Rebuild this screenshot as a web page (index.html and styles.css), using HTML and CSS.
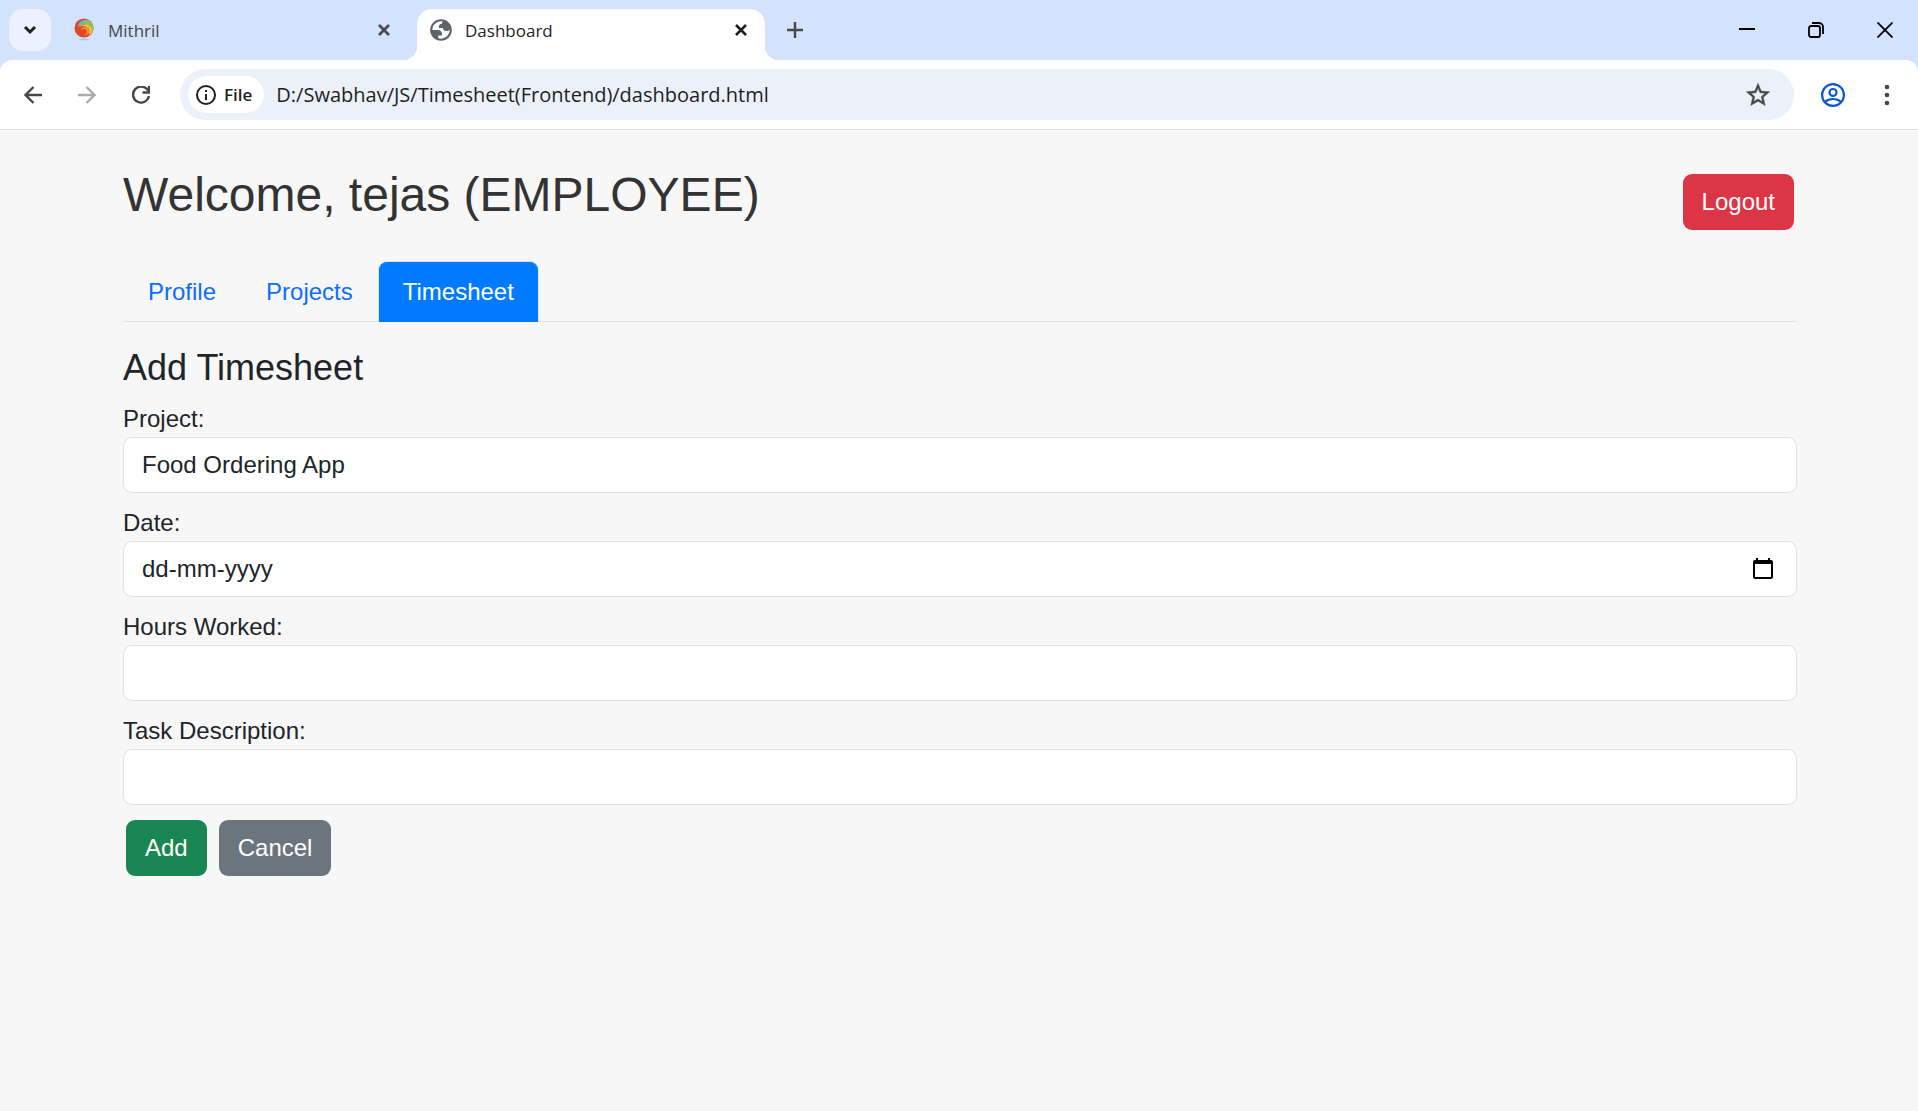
FILE: index.html
```html
<!DOCTYPE html>
<html lang="en">
<head>
<meta charset="utf-8">
<title>Dashboard</title>
<link rel="stylesheet" href="styles.css">
</head>
<body>
<header class="browser">
  <div class="tabstrip">
    <button class="tab-search" aria-label="Search tabs"><svg width="14" height="10" viewBox="0 0 14 10"><path d="M2 2l5 5 5-5" fill="none" stroke="#1f1f1f" stroke-width="3"/></svg></button>
    <div class="tab">
      <svg class="favicon" width="22" height="24" viewBox="0 0 22 24">
        <ellipse cx="11" cy="21.500" rx="5" ry=".8" fill="#b9bfdc"/>
        <circle cx="11" cy="10" r="9.500" fill="#e2452a"/>
        <path d="M6 9C6 3 13 0 17 3c5 4 4 9 1 13 1-8-5-12-12-7z" fill="#8cc152"/>
        <path d="M5 9C5 3 12 0 17 4c-5-1-9 1-12 5z" fill="#5bb5dc"/>
        <path d="M7 9c4-4 11-2 12 3 0 2-1 4-3 5 2-6-3-11-9-8z" fill="#f8c93c"/>
        <path d="M8 13c0-5 8-6 9-1 0 4-4 6-7 5 3 0 5-3 3-5-1-2-4-1-5 1z" fill="#f58a3a"/>
      </svg>
      <span class="tab-title">Mithril</span>
      <button class="plain" aria-label="Close Mithril"><svg width="14" height="14" viewBox="0 0 14 14"><path d="M2 2l10 10M12 2L2 12" stroke="#474747" stroke-width="2.600"/></svg></button>
    </div>
    <div class="tab tab-current">
      <svg class="favicon" width="26" height="26" viewBox="0 0 24 24"><path fill="#5f6368" fill-rule="evenodd" d="M12 2C6.480 2 2 6.480 2 12s4.480 10 10 10 10-4.480 10-10S17.520 2 12 2zM4 12h4.400c3.407.022 4.922 1.730 4.543 5.127H9.488v2.470a8.004 8.004 0 0 0 10.498-8.083C19.327 12.504 18.332 13 17 13c-2.137 0-3.206-.916-3.206-2.750h-3.748c-.274-2.728.683-4.092 2.870-4.092 0-.975.327-1.597.811-1.970A8.004 8.004 0 0 0 4 12z"/></svg>
      <span class="tab-title">Dashboard</span>
      <button class="plain" aria-label="Close Dashboard"><svg width="14" height="14" viewBox="0 0 14 14"><path d="M2 2l10 10M12 2L2 12" stroke="#1f1f1f" stroke-width="2.600"/></svg></button>
    </div>
    <button class="plain new-tab" aria-label="New tab"><svg width="16" height="16" viewBox="0 0 16 16"><path d="M8 0v16M0 8h16" stroke="#474747" stroke-width="2.400"/></svg></button>
    <div class="window-controls">
      <button class="plain" aria-label="Minimize"><svg width="16" height="16" viewBox="0 0 16 16"><path d="M0 7h16" stroke="#000" stroke-width="2"/></svg></button>
      <button class="plain" aria-label="Restore"><svg width="16" height="16" viewBox="0 0 16 16" fill="none" stroke="#000" stroke-width="1.800"><rect x="1" y="4" width="11" height="11" rx="2"/><path d="M4 1h7a4 4 0 0 1 4 4v7"/></svg></button>
      <button class="plain" aria-label="Close window"><svg width="16" height="16" viewBox="0 0 16 16"><path d="M.5.5l15 15M15.500.5l-15 15" stroke="#000" stroke-width="1.800"/></svg></button>
    </div>
  </div>
  <div class="toolbar">
    <div class="nav-buttons">
      <button class="plain" aria-label="Back"><svg width="18" height="18" viewBox="0 0 18 18"><path d="M18 9H2M9.500 1L1.500 9l8 8" fill="none" stroke="#474747" stroke-width="2.400"/></svg></button>
      <button class="plain" aria-label="Forward"><svg width="18" height="18" viewBox="0 0 18 18"><path d="M0 9h16M8.500 1l8 8-8 8" fill="none" stroke="#ababab" stroke-width="2.400"/></svg></button>
      <button class="plain" aria-label="Reload"><svg width="18" height="18" viewBox="0 0 18 18"><path d="M16 4.500A8 8 0 1 0 17 10M17 0v6.500h-6.500" fill="none" stroke="#474747" stroke-width="2.400"/></svg></button>
    </div>
    <div class="address-bar">
      <button class="file-chip"><svg width="20" height="20" viewBox="0 0 20 20"><circle cx="10" cy="10" r="9" fill="none" stroke="#1f1f1f" stroke-width="2"/><path d="M10 5v2M10 9v6" stroke="#1f1f1f" stroke-width="2"/></svg>File</button>
      <input class="address" aria-label="Address" value="D:/Swabhav/JS/Timesheet(Frontend)/dashboard.html">
      <button class="plain" aria-label="Bookmark"><svg width="28" height="28" viewBox="0 0 24 24"><path fill="#474747" stroke="#474747" stroke-width=".4" d="M22 9.240l-7.190-.62L12 2 9.190 8.630 2 9.240l5.460 4.730L5.820 21 12 17.270 18.180 21l-1.630-7.030L22 9.240zM12 15.400l-3.760 2.270 1-4.280-3.320-2.880 4.380-.38L12 6.100l1.710 4.040 4.380.38-3.320 2.880 1 4.280L12 15.400z"/></svg></button>
    </div>
    <button class="plain" aria-label="Profile"><svg width="24" height="24" viewBox="0 0 24 24" fill="none" stroke="#0b57d0" stroke-width="2.200"><circle cx="12" cy="12" r="10.900"/><circle cx="12" cy="9.500" r="3.500"/><path d="M4 19c4-4 12-4 16 0"/></svg></button>
    <button class="plain menu" aria-label="Menu"><svg width="6" height="22" viewBox="0 0 6 22" fill="#474747"><circle cx="3" cy="3" r="2.300"/><circle cx="3" cy="11" r="2.300"/><circle cx="3" cy="19" r="2.300"/></svg></button>
  </div>
</header>
<main class="container">
  <div class="page-head">
    <h1>Welcome, tejas (EMPLOYEE)</h1>
    <button class="btn btn-danger">Logout</button>
  </div>
  <nav class="nav-tabs">
    <a class="nav-link" href="#profile">Profile</a>
    <a class="nav-link" href="#projects">Projects</a>
    <a class="nav-link active" href="#timesheet">Timesheet</a>
  </nav>
  <form id="timesheet">
    <h2>Add Timesheet</h2>
    <div class="field">
      <label for="project">Project:</label>
      <select class="form-control" id="project"><option>Food Ordering App</option></select>
    </div>
    <div class="field">
      <label for="date">Date:</label>
      <div class="form-control date-control">
        <input id="date" placeholder="dd-mm-yyyy">
        <button type="button" class="plain" aria-label="Show date picker"><svg width="20" height="22" viewBox="0 0 20 22"><path fill="#000" fill-rule="evenodd" d="M3 0h2v2h10V0h2v2h1a2 2 0 0 1 2 2v15a2 2 0 0 1-2 2H2a2 2 0 0 1-2-2V4a2 2 0 0 1 2-2h1zM2 6v13h16V6z"/></svg></button>
      </div>
    </div>
    <div class="field">
      <label for="hours">Hours Worked:</label>
      <input class="form-control" id="hours">
    </div>
    <div class="field">
      <label for="task">Task Description:</label>
      <input class="form-control" id="task">
    </div>
    <div class="actions">
      <button type="button" class="btn btn-success">Add</button>
      <button type="button" class="btn btn-secondary">Cancel</button>
    </div>
  </form>
</main>
</body>
</html>
```

FILE: styles.css
```css
*, *::before, *::after { box-sizing: border-box; }

body {
  margin: 0;
  background: #f7f7f7;
  color: #212529;
  font: 24px/36px "Liberation Sans", Arial, sans-serif;
}

button, input, select { font: inherit; color: inherit; }
svg { display: block; flex: none; }

.plain {
  display: grid;
  place-items: center;
  padding: 0;
  border: 0;
  background: none;
}

/* Browser window */
.browser {
  background: #d3e2fd;
  color: #1f1f1f;
  font: 20px/24px "Open Sans", "Noto Sans", sans-serif;
}

.tabstrip {
  display: flex;
  align-items: center;
  height: 60px;
  padding-left: 9px;
}

.tab-search {
  display: grid;
  place-items: center;
  width: 42px;
  height: 42px;
  padding: 0;
  border: 0;
  border-radius: 14px;
  background: #ebf1fe;
}

.tab {
  position: relative;
  display: flex;
  align-items: center;
  width: 348px;
  height: 51px;
  padding: 0 17px 10px 11px;
  margin: 9px 0 0 9px;
  color: #474747;
  font-size: 17px;
}
.tab .favicon { width: 26px; margin-right: 11px; }
.tab-title { flex: 1; padding-top: 2px; }

.tab-current {
  border-radius: 15px 15px 0 0;
  background: #fff;
  color: #1f1f1f;
}
.tab-current::before, .tab-current::after {
  content: "";
  position: absolute;
  bottom: 0;
  width: 15px;
  height: 15px;
}
.tab-current::before {
  right: 100%;
  background: radial-gradient(circle at 0 0, transparent 15px, #fff 16px);
}
.tab-current::after {
  left: 100%;
  background: radial-gradient(circle at 100% 0, transparent 15px, #fff 16px);
}

.new-tab { margin-left: 22px; }

.window-controls {
  display: flex;
  gap: 53px;
  margin-left: auto;
  padding-right: 25px;
}

.toolbar {
  display: flex;
  align-items: center;
  height: 71px;
  padding: 0 28px 2px 24px;
  border-radius: 12px 12px 0 0;
  background: #fff;
  box-shadow: inset 0 -1px #fff, inset 0 -2px #dadce0;
}

.nav-buttons { display: flex; gap: 36px; }

.address-bar {
  display: flex;
  flex: 1;
  align-items: center;
  height: 51px;
  margin: 0 27px 0 30px;
  padding: 0 22px 0 8px;
  border-radius: 26px;
  background: #ecf0f9;
}

.file-chip {
  display: flex;
  align-items: center;
  gap: 8px;
  height: 37px;
  padding: 0 12px 0 8px;
  border: 0;
  border-radius: 19px;
  background: #fff;
  font-size: 17px;
  font-weight: 600;
}

.address {
  flex: 1;
  min-width: 0;
  padding: 0 12px;
  border: 0;
  background: none;
}

.menu { margin-left: 39px; }

/* Dashboard page */
.container { padding: 35px 121px 24px 123px; }

.page-head {
  display: flex;
  align-items: flex-start;
  justify-content: space-between;
  padding-right: 3px;
  margin-bottom: 31px;
}

h1, h2 { margin: 0; font-weight: 400; }
h1 { color: #333; font-size: 48px; line-height: 58px; }
h2 { margin-bottom: 12px; font-size: 36px; line-height: 43px; }

.btn {
  height: 56px;
  padding: 0 19px;
  border: 0;
  border-radius: 9px;
  color: #fff;
}
.btn-danger { margin-top: 8px; background: #dc3545; }
.btn-success { background: #198754; }
.btn-secondary { background: #6c757d; }

.nav-tabs {
  display: flex;
  margin-bottom: 24px;
  border-bottom: 1px solid #dee2e6;
}
.nav-link {
  padding: 12px 24px;
  margin-bottom: -1px;
  border: 1px solid transparent;
  border-bottom: 0;
  border-radius: 9px 9px 0 0;
  color: #0d6efd;
  text-decoration: none;
}
.nav-link.active {
  border-color: #dee2e6;
  background: #007bff;
  color: #fff;
}

.field { margin-bottom: 12px; }
label { display: block; }

.form-control {
  display: block;
  width: 100%;
  height: 56px;
  padding: 0 18px;
  border: 1px solid #dee2e6;
  border-radius: 9px;
  background: #fff;
  appearance: none;
}

.date-control {
  display: flex;
  align-items: center;
  padding-right: 23px;
}
.date-control input {
  flex: 1;
  min-width: 0;
  padding: 0;
  border: 0;
  background: none;
}
.date-control input::placeholder { color: #212529; opacity: 1; }

.actions {
  display: flex;
  gap: 12px;
  padding: 3px;
}
```
